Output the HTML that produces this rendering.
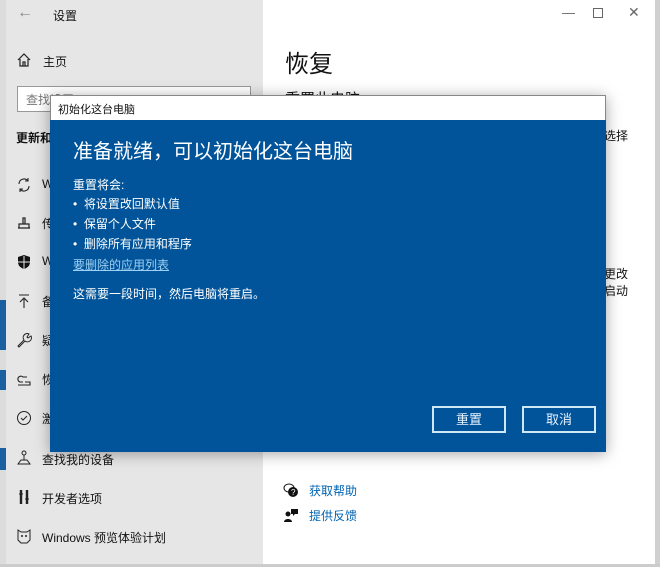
<!DOCTYPE html>
<html><head><meta charset="utf-8"><style>
*{margin:0;padding:0;box-sizing:border-box}
body{width:660px;height:567px;overflow:hidden;position:relative;background:#fff;font-family:"Liberation Sans","Noto Sans CJK SC",sans-serif;font-size:12px;color:#111}
.a{position:absolute;white-space:nowrap}
#side{position:absolute;left:0;top:0;width:263px;height:567px;background:#e6e6e6}
#strip{position:absolute;left:0;top:0;width:6px;height:567px;background:#dcdcdc}
.ic{position:absolute;left:16px;width:16px;height:16px}
#dlg{position:absolute;left:50px;top:95px;width:556px;height:357px;background:#01549a;box-shadow:0 2px 14px rgba(0,0,0,.35)}
#dt{position:absolute;left:0;top:0;width:556px;height:25px;background:#fff;border:1px solid #888;border-bottom:none}
.w{color:#fff}
.btn{position:absolute;top:311px;width:74px;height:27px;border:2px solid #cfe8f5;color:#e8f4ff;text-align:center;line-height:23px;font-size:13px}
</style></head><body>
<div id="side"></div>
<div id="strip"></div>
<div class="a" style="left:0;top:300px;width:6px;height:50px;background:#1a5fa0"></div>
<div class="a" style="left:0;top:370px;width:6px;height:20px;background:#1a5fa0"></div>
<div class="a" style="left:0;top:448px;width:6px;height:22px;background:#1a5fa0"></div>
<div class="a" style="left:655px;top:0;width:5px;height:567px;background:#d0d0d0"></div>
<div class="a" style="left:0;top:564px;width:660px;height:3px;background:#ccc"></div>

<div class="a" style="left:17px;top:4px;font-size:16px;color:#888">←</div>
<div class="a" style="left:53px;top:7px;font-size:12px">设置</div>
<div class="a" style="left:562px;top:5px;color:#666;font-size:13px">—</div>
<div class="a" style="left:593px;top:8px;width:10px;height:10px;border:1px solid #666"></div>
<div class="a" style="left:628px;top:4px;color:#666;font-size:14px">✕</div>

<svg class="ic" style="top:52px" viewBox="0 0 16 16"><path d="M2 8L8 2l6 6M4 7v7h8V7M7 14v-4h2v4" fill="none" stroke="#222" stroke-width="1.2"/></svg>
<div class="a" style="left:43px;top:53px;font-size:12px">主页</div>
<div class="a" style="left:17px;top:86px;width:234px;height:26px;border:1px solid #999;background:#fff"></div>
<div class="a" style="left:26px;top:91px;color:#777;font-size:12px">查找设置</div>
<div class="a" style="left:16px;top:129px;font-weight:bold;font-size:12px">更新和</div>

<svg class="ic" style="top:177px" viewBox="0 0 16 16"><path d="M3 7a5 5 0 0 1 9-3M13 9a5 5 0 0 1-9 3M12 1v3H9M4 15v-3h3" fill="none" stroke="#222" stroke-width="1.1"/></svg>
<div class="a" style="left:42px;top:177px">W</div>
<svg class="ic" style="top:215px" viewBox="0 0 16 16"><path d="M2 13h12M3 13V9h10v4M7 9V3h2v6" fill="none" stroke="#222" stroke-width="1.2"/></svg>
<div class="a" style="left:42px;top:215px">传</div>
<svg class="ic" style="top:254px" viewBox="0 0 16 16"><path d="M8 1L2 3v5c0 4 3 6 6 7 3-1 6-3 6-7V3z" fill="#111"/><path d="M8 2v13M2 8h12" stroke="#e6e6e6" stroke-width="1"/></svg>
<div class="a" style="left:42px;top:254px">W</div>
<svg class="ic" style="top:293px" viewBox="0 0 16 16"><path d="M3 2h10M8 5v10M4 9l4-4 4 4" fill="none" stroke="#222" stroke-width="1.1"/></svg>
<div class="a" style="left:42px;top:293px">备</div>
<svg class="ic" style="top:332px" viewBox="0 0 16 16"><path d="M2 14l6-6a4 4 0 0 1 5-6l-2 3 1 1 3-2a4 4 0 0 1-6 5l-6 6z" fill="none" stroke="#222" stroke-width="1"/></svg>
<div class="a" style="left:42px;top:332px">疑</div>
<svg class="ic" style="top:371px" viewBox="0 0 16 16"><path d="M2 14h12v-3H9M7 11H4a3 3 0 1 1 3-5h4" fill="none" stroke="#222" stroke-width="1.1"/></svg>
<div class="a" style="left:42px;top:371px">恢</div>
<svg class="ic" style="top:410px" viewBox="0 0 16 16"><circle cx="8" cy="8" r="6.5" fill="none" stroke="#222"/><path d="M5 8l2 2 4-4" fill="none" stroke="#222"/></svg>
<div class="a" style="left:42px;top:410px">激</div>
<svg class="ic" style="top:450px" viewBox="0 0 16 16"><circle cx="8" cy="3" r="2" fill="none" stroke="#222"/><path d="M8 5v5M2 14l3-4h6l3 4z" fill="none" stroke="#222"/></svg>
<div class="a" style="left:42px;top:451px;font-size:12px">查找我的设备</div>
<svg class="ic" style="top:489px" viewBox="0 0 16 16"><path d="M5 1v14M11 1v14" stroke="#222" stroke-width="2.4"/><path d="M3 5h4M9 10h4" stroke="#222"/></svg>
<div class="a" style="left:42px;top:490px;font-size:12px">开发者选项</div>
<svg class="ic" style="top:528px" viewBox="0 0 16 16"><path d="M2 2l3 2h6l3-2v10l-3 3H5l-3-3z" fill="none" stroke="#222"/><circle cx="6" cy="8" r="1" fill="#222"/><circle cx="10" cy="8" r="1" fill="#222"/></svg>
<div class="a" style="left:42px;top:529px;font-size:12px">Windows 预览体验计划</div>

<div class="a" style="left:285px;top:44px;font-size:24px">恢复</div>
<div class="a" style="left:285px;top:88px;font-size:15px">重置此电脑</div>
<div class="a" style="left:604px;top:127px;font-size:12px">选择</div>
<div class="a" style="left:604px;top:265px;font-size:12px">更改</div>
<div class="a" style="left:604px;top:282px;font-size:12px">启动</div>
<svg class="a" style="left:283px;top:482px" width="16" height="16" viewBox="0 0 16 16"><ellipse cx="6" cy="6" rx="5" ry="4" fill="none" stroke="#111"/><circle cx="10" cy="10" r="5" fill="#111"/><text x="8" y="13" font-size="8" fill="#fff">?</text></svg>
<div class="a" style="left:309px;top:482px;color:#0063b1;font-size:12px">获取帮助</div>
<svg class="a" style="left:283px;top:507px" width="16" height="16" viewBox="0 0 16 16"><circle cx="5" cy="7" r="2.5" fill="#111"/><path d="M1 15c0-4 8-4 8 0z" fill="#111"/><path d="M8 2h7v5h-3l-2 2V7H8z" fill="#111"/></svg>
<div class="a" style="left:309px;top:507px;color:#0063b1;font-size:12px">提供反馈</div>

<div id="dlg">
<div id="dt"><div class="a" style="left:7px;top:5px;font-size:11px">初始化这台电脑</div></div>
<div class="a w" style="left:23px;top:40px;font-size:20px">准备就绪，可以初始化这台电脑</div>
<div class="a w" style="left:23px;top:81px;font-size:12px">重置将会:</div>
<div class="a w" style="left:23px;top:100px;font-size:12px">•&nbsp;&nbsp;将设置改回默认值</div>
<div class="a w" style="left:23px;top:120px;font-size:12px">•&nbsp;&nbsp;保留个人文件</div>
<div class="a w" style="left:23px;top:140px;font-size:12px">•&nbsp;&nbsp;删除所有应用和程序</div>
<div class="a" style="left:23px;top:161px;font-size:12px;color:#9cd0f5;text-decoration:underline">要删除的应用列表</div>
<div class="a w" style="left:23px;top:190px;font-size:12px">这需要一段时间，然后电脑将重启。</div>
<div class="btn" style="left:382px">重置</div>
<div class="btn" style="left:472px">取消</div>
</div>
</body></html>
